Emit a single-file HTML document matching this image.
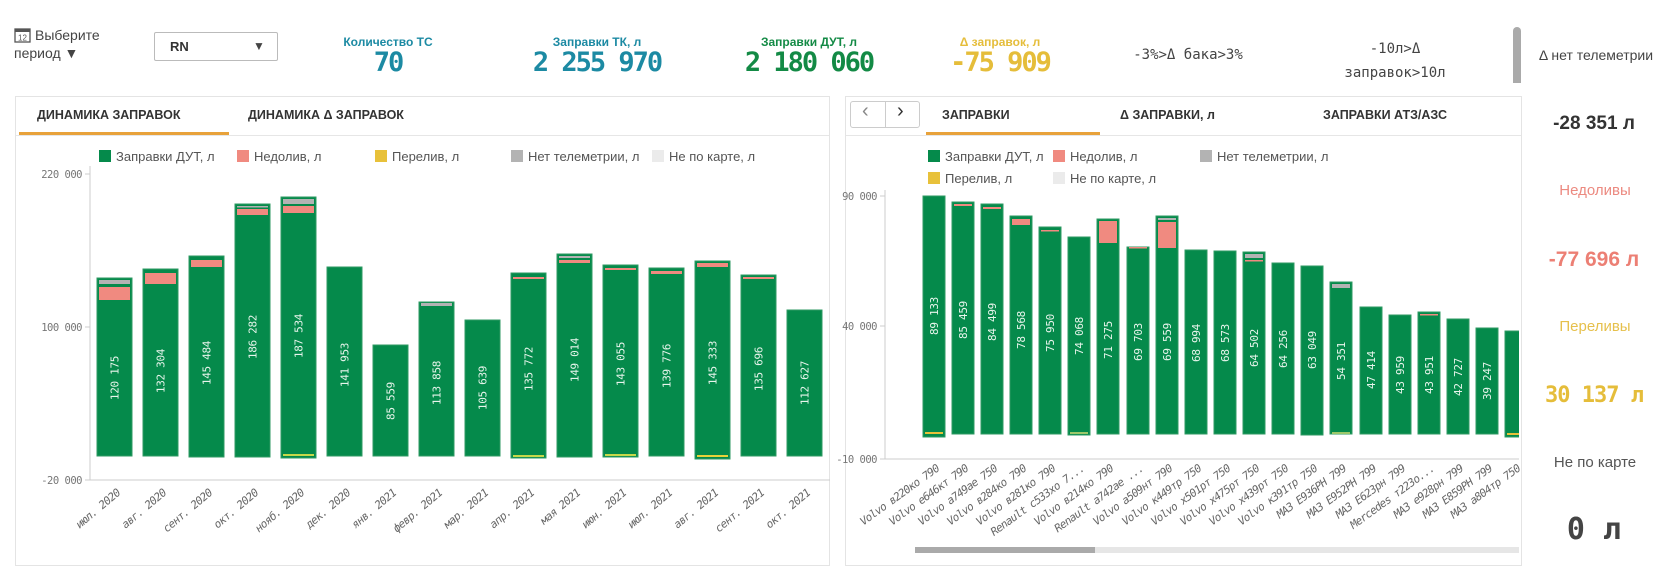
<!DOCTYPE html>
<html><head><meta charset="utf-8">
<style>
*{margin:0;padding:0;box-sizing:border-box}
body{width:1667px;height:553px;background:#fff;position:relative;overflow:hidden;font-family:"Liberation Sans Narrow","Liberation Sans","DejaVu Sans",sans-serif;color:#333}
.a{position:absolute;white-space:nowrap}
.kl{font-size:12px;font-weight:bold;transform:translateX(-50%);}
.kv{font-family:"DejaVu Sans Mono","Liberation Mono",monospace;font-weight:bold;font-size:27px;letter-spacing:-2px;transform:translateX(-50%)}
.mono{font-family:"DejaVu Sans Mono","Liberation Mono",monospace}
.c{transform:translateX(-50%)}
.panel{position:absolute;border:1px solid #e4e4e4;background:#fff}
.tab{position:absolute;font-size:12.5px;font-weight:bold;color:#333}
.rs{font-size:15px;color:#555}
</style></head><body>

<svg class="a" style="left:14px;top:27px" width="17" height="16" viewBox="0 0 17 16"><rect x="1" y="2" width="15" height="13" fill="none" stroke="#555" stroke-width="1.3"/><rect x="1" y="2" width="15" height="3" fill="#555"/><text x="8.5" y="13.5" font-size="8" text-anchor="middle" fill="#555" font-family="Liberation Sans">12</text></svg>
<div class="a" style="left:35px;top:27px;font-size:14px;color:#444">Выберите</div>
<div class="a" style="left:14px;top:45px;font-size:14px;color:#444">период &#9660;</div>
<div class="a" style="left:154px;top:32px;width:124px;height:29px;border:1px solid #bbb;border-radius:2px"></div>
<div class="a" style="left:170px;top:39px;font-size:13px;font-weight:bold">RN</div>
<div class="a" style="left:253px;top:39px;font-size:12px;color:#444">&#9660;</div>

<div class="a kl" style="left:388px;top:35px;color:#1c8aa3">Количество ТС</div>
<div class="a kv" style="left:388px;top:47px;color:#1c8aa3">70</div>
<div class="a kl" style="left:597px;top:35px;color:#1c8aa3">Заправки ТК, л</div>
<div class="a kv" style="left:597px;top:47px;color:#1c8aa3">2 255 970</div>
<div class="a kl" style="left:809px;top:35px;color:#138a45">Заправки ДУТ, л</div>
<div class="a kv" style="left:809px;top:47px;color:#138a45">2 180 060</div>
<div class="a kl" style="left:1000px;top:35px;color:#e5bd3a">Δ заправок, л</div>
<div class="a kv" style="left:1000px;top:47px;color:#e5bd3a">-75 909</div>
<div class="a mono c" style="left:1188px;top:47px;font-size:14px;color:#444">-3%&gt;Δ бака&gt;3%</div>
<div class="a mono c" style="left:1395px;top:41px;font-size:14px;color:#444">-10л&gt;Δ</div>
<div class="a mono c" style="left:1395px;top:65px;font-size:14px;color:#444">заправок&gt;10л</div>
<div class="a" style="left:1513px;top:27px;width:8px;height:56px;background:#aaa;border-radius:4px 4px 0 0"></div>

<div class="a c" style="left:1596px;top:47px;font-size:14px;color:#444">Δ нет телеметрии</div>
<div class="a c" style="left:1594px;top:113px;font-size:19px;font-weight:bold;color:#333">-28 351 л</div>
<div class="a c rs" style="left:1595px;top:182px;color:#ec8a80">Недоливы</div>
<div class="a c" style="left:1594px;top:248px;font-size:21px;font-weight:bold;color:#ec7f74">-77 696 л</div>
<div class="a c rs" style="left:1595px;top:318px;color:#e6c04c">Переливы</div>
<div class="a c mono" style="left:1594px;top:383px;font-size:22px;font-weight:bold;color:#e5bd3a;letter-spacing:-1px">30 137 л</div>
<div class="a c rs" style="left:1595px;top:454px;color:#555">Не по карте</div>
<div class="a c mono" style="left:1594px;top:512px;font-size:30px;font-weight:bold;color:#444">0 л</div>

<div class="panel" style="left:15px;top:96px;width:815px;height:470px"></div>
<div class="a" style="left:16px;top:135px;width:813px;height:1px;background:#e6e6e6"></div>
<div class="tab" style="left:37px;top:108px">ДИНАМИКА ЗАПРАВОК</div>
<div class="tab" style="left:248px;top:108px">ДИНАМИКА Δ ЗАПРАВОК</div>
<div class="a" style="left:19px;top:132px;width:210px;height:3px;background:#e8a23a"></div>

<div class="panel" style="left:845px;top:96px;width:677px;height:470px"></div>
<div class="a" style="left:846px;top:135px;width:675px;height:1px;background:#e6e6e6"></div>
<div class="a" style="left:850px;top:101px;width:70px;height:27px;border:1px solid #ccc;border-radius:3px"></div>
<div class="a" style="left:885px;top:101px;width:1px;height:27px;background:#ccc"></div>
<div class="a" style="left:862px;top:100px;font-size:20px;color:#888">&#8249;</div>
<div class="a" style="left:897px;top:100px;font-size:20px;color:#333">&#8250;</div>
<div class="tab" style="left:942px;top:108px">ЗАПРАВКИ</div>
<div class="tab" style="left:1120px;top:108px">Δ ЗАПРАВКИ, л</div>
<div class="tab" style="left:1323px;top:108px">ЗАПРАВКИ АТЗ/АЗС</div>
<div class="a" style="left:926px;top:132px;width:174px;height:3px;background:#e8a23a"></div>
<div class="a" style="left:915px;top:547px;width:604px;height:6px;background:#e6e6e6"></div>
<div class="a" style="left:915px;top:547px;width:180px;height:6px;background:#aaa"></div>

<svg class="a" style="left:0;top:0" width="1667" height="553" font-family="Liberation Sans Narrow, Liberation Sans, sans-serif">
<defs><clipPath id="rc"><rect x="880" y="180" width="639" height="370"/></clipPath></defs>
<g font-size="13" fill="#555">
<rect x="99" y="150" width="12" height="12" fill="#058a4b"/><text x="116" y="161">Заправки ДУТ, л</text>
<rect x="237" y="150" width="12" height="12" fill="#f08a80"/><text x="254" y="161">Недолив, л</text>
<rect x="375" y="150" width="12" height="12" fill="#e8c13a"/><text x="392" y="161">Перелив, л</text>
<rect x="511" y="150" width="12" height="12" fill="#b3b3b3"/><text x="528" y="161">Нет телеметрии, л</text>
<rect x="652" y="150" width="12" height="12" fill="#ebebeb"/><text x="669" y="161">Не по карте, л</text>
<rect x="928" y="150" width="12" height="12" fill="#058a4b"/><text x="945" y="161">Заправки ДУТ, л</text>
<rect x="1053" y="150" width="12" height="12" fill="#f08a80"/><text x="1070" y="161">Недолив, л</text>
<rect x="1200" y="150" width="12" height="12" fill="#b3b3b3"/><text x="1217" y="161">Нет телеметрии, л</text>
<rect x="928" y="172" width="12" height="12" fill="#e8c13a"/><text x="945" y="183">Перелив, л</text>
<rect x="1053" y="172" width="12" height="12" fill="#ebebeb"/><text x="1070" y="183">Не по карте, л</text>
</g>
<g stroke="#ccc" stroke-width="1"><line x1="90" y1="166" x2="90" y2="480"/><line x1="90" y1="480" x2="830" y2="480"/>
<line x1="85" y1="174" x2="90" y2="174"/><line x1="85" y1="327" x2="90" y2="327"/><line x1="85" y1="480" x2="90" y2="480"/>
<line x1="885" y1="190" x2="885" y2="459"/><line x1="885" y1="459" x2="1519" y2="459"/>
<line x1="880" y1="196" x2="885" y2="196"/><line x1="880" y1="326" x2="885" y2="326"/><line x1="880" y1="459" x2="885" y2="459"/></g>
<g font-family="DejaVu Sans Mono, monospace" font-size="10.5" fill="#777" text-anchor="end" letter-spacing="-0.5">
<text x="82" y="178">220 000</text><text x="82" y="331">100 000</text><text x="82" y="484">-20 000</text>
<text x="877" y="200">90 000</text><text x="877" y="330">40 000</text><text x="877" y="463">-10 000</text></g>

<g stroke="#2f9a63" stroke-width="1" fill="#058a4b">
<rect x="97" y="278" width="35" height="178"/><rect x="143" y="269" width="35" height="187"/><rect x="189" y="256" width="35" height="201"/><rect x="235" y="204" width="35" height="253"/><rect x="281" y="197" width="35" height="261"/><rect x="327" y="267" width="35" height="189"/><rect x="373" y="345" width="35" height="111"/><rect x="419" y="302" width="35" height="154"/><rect x="465" y="320" width="35" height="136"/><rect x="511" y="273" width="35" height="185"/><rect x="557" y="254" width="35" height="203"/><rect x="603" y="265" width="35" height="192"/><rect x="649" y="268" width="35" height="188"/><rect x="695" y="261" width="35" height="198"/><rect x="741" y="275" width="35" height="181"/><rect x="787" y="310" width="35" height="146"/>
</g>
<g stroke="none">
<rect x="99" y="287" width="31" height="13" fill="#f08a80"/><rect x="99" y="280" width="31" height="4" fill="#b3b3b3"/>
<rect x="145" y="273" width="31" height="11" fill="#f08a80"/>
<rect x="191" y="260" width="31" height="7" fill="#f08a80"/>
<rect x="237" y="209" width="31" height="6" fill="#f08a80"/><rect x="237" y="206" width="31" height="1.5" fill="#b3b3b3"/>
<rect x="283" y="206" width="31" height="7" fill="#f08a80"/><rect x="283" y="199" width="31" height="5" fill="#b3b3b3"/>
<rect x="421" y="303" width="31" height="3" fill="#b3b3b3"/>
<rect x="513" y="277" width="31" height="2" fill="#f08a80"/>
<rect x="559" y="260" width="31" height="3" fill="#f08a80"/><rect x="559" y="256" width="31" height="2" fill="#b3b3b3"/>
<rect x="605" y="268" width="31" height="2" fill="#f08a80"/>
<rect x="651" y="271" width="31" height="3" fill="#f08a80"/>
<rect x="697" y="263" width="31" height="4" fill="#f08a80"/>
<rect x="743" y="277" width="31" height="2" fill="#f08a80"/>
<rect x="283" y="454" width="31" height="2" fill="#c6d84a"/><rect x="513" y="455" width="31" height="2" fill="#c6d84a"/><rect x="605" y="454" width="31" height="2" fill="#c6d84a"/><rect x="697" y="455" width="31" height="2" fill="#e8d23a"/>
</g>
<g font-family="DejaVu Sans Mono, monospace" font-size="11" fill="#e8f5ec" text-anchor="middle" letter-spacing="-0.3">
<text transform="translate(118.5,378) rotate(-90)">120 175</text>
<text transform="translate(164.5,371) rotate(-90)">132 304</text>
<text transform="translate(210.5,363) rotate(-90)">145 484</text>
<text transform="translate(256.5,337) rotate(-90)">186 282</text>
<text transform="translate(302.5,336) rotate(-90)">187 534</text>
<text transform="translate(348.5,365) rotate(-90)">141 953</text>
<text transform="translate(394.5,401) rotate(-90)">85 559</text>
<text transform="translate(440.5,383) rotate(-90)">113 858</text>
<text transform="translate(486.5,388) rotate(-90)">105 639</text>
<text transform="translate(532.5,369) rotate(-90)">135 772</text>
<text transform="translate(578.5,360) rotate(-90)">149 014</text>
<text transform="translate(624.5,364) rotate(-90)">143 055</text>
<text transform="translate(670.5,366) rotate(-90)">139 776</text>
<text transform="translate(716.5,363) rotate(-90)">145 333</text>
<text transform="translate(762.5,369) rotate(-90)">135 696</text>
<text transform="translate(808.5,383) rotate(-90)">112 627</text>
</g>
<g font-family="DejaVu Sans Mono, monospace" font-size="11" font-style="italic" fill="#666" text-anchor="end" letter-spacing="-0.6">
<text transform="translate(121,494) rotate(-40)">июл. 2020</text>
<text transform="translate(167,494) rotate(-40)">авг. 2020</text>
<text transform="translate(213,494) rotate(-40)">сент. 2020</text>
<text transform="translate(259,494) rotate(-40)">окт. 2020</text>
<text transform="translate(305,494) rotate(-40)">нояб. 2020</text>
<text transform="translate(351,494) rotate(-40)">дек. 2020</text>
<text transform="translate(397,494) rotate(-40)">янв. 2021</text>
<text transform="translate(443,494) rotate(-40)">февр. 2021</text>
<text transform="translate(489,494) rotate(-40)">мар. 2021</text>
<text transform="translate(535,494) rotate(-40)">апр. 2021</text>
<text transform="translate(581,494) rotate(-40)">мая 2021</text>
<text transform="translate(627,494) rotate(-40)">июн. 2021</text>
<text transform="translate(673,494) rotate(-40)">июл. 2021</text>
<text transform="translate(719,494) rotate(-40)">авг. 2021</text>
<text transform="translate(765,494) rotate(-40)">сент. 2021</text>
<text transform="translate(811,494) rotate(-40)">окт. 2021</text>
</g>

<g clip-path="url(#rc)">
<g stroke="#2f9a63" stroke-width="1" fill="#058a4b">
<rect x="923" y="196" width="22" height="241"/><rect x="952" y="202" width="22" height="232"/><rect x="981" y="204" width="22" height="230"/><rect x="1010" y="216" width="22" height="218"/><rect x="1039" y="227" width="22" height="207"/><rect x="1068" y="237" width="22" height="198"/><rect x="1097" y="219" width="22" height="215"/><rect x="1127" y="247" width="22" height="187"/><rect x="1156" y="216" width="22" height="218"/><rect x="1185" y="250" width="22" height="184"/><rect x="1214" y="251" width="22" height="183"/><rect x="1243" y="252" width="22" height="182"/><rect x="1272" y="263" width="22" height="171"/><rect x="1301" y="266" width="22" height="169"/><rect x="1330" y="282" width="22" height="152"/><rect x="1360" y="307" width="22" height="127"/><rect x="1389" y="315" width="22" height="119"/><rect x="1418" y="312" width="22" height="122"/><rect x="1447" y="319" width="22" height="115"/><rect x="1476" y="328" width="22" height="106"/><rect x="1505" y="331" width="22" height="106"/>
</g>
<g>
<rect x="925" y="432" width="18" height="2" fill="#e8c13a"/>
<rect x="954" y="204" width="18" height="2" fill="#f08a80"/>
<rect x="983" y="207" width="18" height="2" fill="#f08a80"/>
<rect x="1012" y="219" width="18" height="6" fill="#f08a80"/>
<rect x="1041" y="230" width="18" height="1.5" fill="#f08a80"/>
<rect x="1099" y="221" width="18" height="22" fill="#f08a80"/>
<rect x="1129" y="247" width="18" height="1.5" fill="#f08a80"/>
<rect x="1158" y="222" width="18" height="26" fill="#f08a80"/><rect x="1158" y="218" width="18" height="2" fill="#b3b3b3"/>
<rect x="1245" y="254" width="18" height="4" fill="#b3b3b3"/><rect x="1245" y="260" width="18" height="1.5" fill="#f08a80"/>
<rect x="1332" y="284" width="18" height="4" fill="#b3b3b3"/>
<rect x="1420" y="314" width="18" height="1.5" fill="#f08a80"/>
<rect x="1507" y="433" width="18" height="2" fill="#e8c13a"/>
<rect x="1070" y="432" width="18" height="2" fill="#9cc86a"/><rect x="1332" y="432" width="18" height="2" fill="#9cc86a"/>
</g>
<g font-family="DejaVu Sans Mono, monospace" font-size="11" fill="#e8f5ec" text-anchor="middle" letter-spacing="-0.3">
<text transform="translate(938,316) rotate(-90)">89 133</text>
<text transform="translate(967,320) rotate(-90)">85 459</text>
<text transform="translate(996,322) rotate(-90)">84 499</text>
<text transform="translate(1025,330) rotate(-90)">78 568</text>
<text transform="translate(1054,333) rotate(-90)">75 950</text>
<text transform="translate(1083,336) rotate(-90)">74 068</text>
<text transform="translate(1112,340) rotate(-90)">71 275</text>
<text transform="translate(1142,342) rotate(-90)">69 703</text>
<text transform="translate(1171,342) rotate(-90)">69 559</text>
<text transform="translate(1200,343) rotate(-90)">68 994</text>
<text transform="translate(1229,343) rotate(-90)">68 573</text>
<text transform="translate(1258,348) rotate(-90)">64 502</text>
<text transform="translate(1287,349) rotate(-90)">64 256</text>
<text transform="translate(1316,350) rotate(-90)">63 049</text>
<text transform="translate(1345,361) rotate(-90)">54 351</text>
<text transform="translate(1375,370) rotate(-90)">47 414</text>
<text transform="translate(1404,375) rotate(-90)">43 959</text>
<text transform="translate(1433,375) rotate(-90)">43 951</text>
<text transform="translate(1462,377) rotate(-90)">42 727</text>
<text transform="translate(1491,381) rotate(-90)">39 247</text>
</g>
</g>
<g font-family="DejaVu Sans Mono, monospace" font-size="11" font-style="italic" fill="#666" text-anchor="end" letter-spacing="-0.7">
<text transform="translate(940,470) rotate(-36)">Volvo в220ко 790</text>
<text transform="translate(969,470) rotate(-36)">Volvo е646кт 790</text>
<text transform="translate(998,470) rotate(-36)">Volvo а749ае 750</text>
<text transform="translate(1027,470) rotate(-36)">Volvo в284ко 790</text>
<text transform="translate(1056,470) rotate(-36)">Volvo в281ко 790</text>
<text transform="translate(1085,470) rotate(-36)">Renault с533хо 7...</text>
<text transform="translate(1114,470) rotate(-36)">Volvo в214ко 790</text>
<text transform="translate(1144,470) rotate(-36)">Renault а742ае ...</text>
<text transform="translate(1173,470) rotate(-36)">Volvo а509нт 790</text>
<text transform="translate(1202,470) rotate(-36)">Volvo к449тр 750</text>
<text transform="translate(1231,470) rotate(-36)">Volvo х501рт 750</text>
<text transform="translate(1260,470) rotate(-36)">Volvo х475рт 750</text>
<text transform="translate(1289,470) rotate(-36)">Volvo х439рт 750</text>
<text transform="translate(1318,470) rotate(-36)">Volvo к391тр 750</text>
<text transform="translate(1347,470) rotate(-36)">МАЗ Е936РН 799</text>
<text transform="translate(1377,470) rotate(-36)">МАЗ Е952РН 799</text>
<text transform="translate(1406,470) rotate(-36)">МАЗ Е623рн 799</text>
<text transform="translate(1435,470) rotate(-36)">Mercedes т223о...</text>
<text transform="translate(1464,470) rotate(-36)">МАЗ е928рн 799</text>
<text transform="translate(1493,470) rotate(-36)">МАЗ Е859РН 799</text>
<text transform="translate(1521,470) rotate(-36)">МАЗ а804тр 750</text>
</g>
</svg>
</body></html>
